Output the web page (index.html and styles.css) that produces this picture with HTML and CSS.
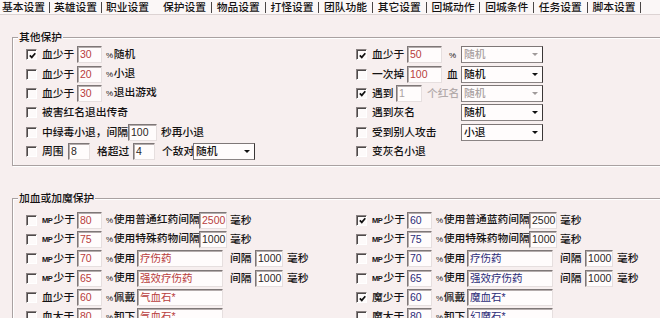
FILE: index.html
```html
<!DOCTYPE html>
<html lang="zh-CN">
<head>
<meta charset="utf-8">
<title>保护设置</title>
<link rel="stylesheet" href="styles.css">
</head>
<body>
<nav class="tabs">
  <span class="tab">基本设置</span><i class="sep sep-n"></i>
  <span class="tab">英雄设置</span><i class="sep sep-n"></i>
  <span class="tab">职业设置</span>
  <span class="tab tab-on">保护设置</span><i class="sep"></i>
  <span class="tab">物品设置</span><i class="sep"></i>
  <span class="tab">打怪设置</span><i class="sep"></i>
  <span class="tab">团队功能</span><i class="sep"></i>
  <span class="tab">其它设置</span><i class="sep"></i>
  <span class="tab">回城动作</span><i class="sep"></i>
  <span class="tab">回城条件</span><i class="sep"></i>
  <span class="tab">任务设置</span><i class="sep"></i>
  <span class="tab">脚本设置</span><i class="sep"></i>
</nav>

<section class="group g1">
  <span class="legend">其他保护</span>
  <div class="cols">
    <div class="col">
      <div class="row"><span class="cb on"><svg viewBox="0 0 7 7"><polyline points="0.8,3.3 2.8,5.4 6.3,1.3"/></svg></span><span class="w35">血少于</span><span class="box w25 red">30</span><span class="ml4"><span class="pct">%</span>随机</span></div>
      <div class="row"><span class="cb"></span><span class="w35">血少于</span><span class="box w25 red">20</span><span class="ml4"><span class="pct">%</span>小退</span></div>
      <div class="row"><span class="cb"></span><span class="w35">血少于</span><span class="box w25 red">30</span><span class="ml4"><span class="pct">%</span>退出游戏</span></div>
      <div class="row"><span class="cb"></span><span>被害红名退出传奇</span></div>
      <div class="row"><span class="cb"></span><span class="w86">中绿毒小退，间隔</span><span class="box w29">100</span><span class="ml4">秒再小退</span></div>
      <div class="row"><span class="cb"></span><span class="w26">周围</span><span class="box w22">8</span><span class="ml7 w36">格超过</span><span class="box w22">4</span><span class="ml7 w31">个敌对</span><span class="combo w62"><span class="cv">随机</span><span class="btn"><i class="arr"></i></span></span></div>
    </div>
    <div class="col">
      <div class="row"><span class="cb on"><svg viewBox="0 0 7 7"><polyline points="0.8,3.3 2.8,5.4 6.3,1.3"/></svg></span><span class="w35">血少于</span><span class="box w35 red">50</span><span class="ml7 w12"><span class="pct">%</span></span><span class="combo w82 dis"><span class="cv">随机</span><span class="btn"><i class="arr"></i></span></span></div>
      <div class="row"><span class="cb"></span><span class="w35">一次掉</span><span class="box w35 red">100</span><span class="ml5 w14">血</span><span class="combo w82"><span class="cv">随机</span><span class="btn"><i class="arr"></i></span></span></div>
      <div class="row"><span class="cb on"><svg viewBox="0 0 7 7"><polyline points="0.8,3.3 2.8,5.4 6.3,1.3"/></svg></span><span class="w24">遇到</span><span class="box w26 off">1</span><span class="ml5 w34 grey">个红名</span><span class="combo w82 dis"><span class="cv">随机</span><span class="btn"><i class="arr"></i></span></span></div>
      <div class="row"><span class="cb"></span><span class="w89">遇到灰名</span><span class="combo w82"><span class="cv">随机</span><span class="btn"><i class="arr"></i></span></span></div>
      <div class="row"><span class="cb"></span><span class="w89">受到别人攻击</span><span class="combo w82"><span class="cv">小退</span><span class="btn"><i class="arr"></i></span></span></div>
      <div class="row"><span class="cb"></span><span>变灰名小退</span></div>
    </div>
  </div>
</section>

<section class="group g2">
  <span class="legend">加血或加魔保护</span>
  <div class="cols">
    <div class="col">
      <div class="row"><span class="cb"></span><span class="w35"><span class="mp">MP</span>少于</span><span class="box w25 red">80</span><span class="ml4 w93"><span class="pct">%</span>使用普通红药间隔</span><span class="box w28 red">2500</span><span class="ml3">毫秒</span></div>
      <div class="row"><span class="cb"></span><span class="w35"><span class="mp">MP</span>少于</span><span class="box w25 red">75</span><span class="ml4 w93"><span class="pct">%</span>使用特殊药物间隔</span><span class="box w28">1000</span><span class="ml3">毫秒</span></div>
      <div class="row"><span class="cb"></span><span class="w35"><span class="mp">MP</span>少于</span><span class="box w25 red">70</span><span class="ml4 w31"><span class="pct">%</span>使用</span><span class="box w86 red">疗伤药</span><span class="ml7 w25">间隔</span><span class="box w28">1000</span><span class="ml4">毫秒</span></div>
      <div class="row"><span class="cb"></span><span class="w35"><span class="mp">MP</span>少于</span><span class="box w25 red">65</span><span class="ml4 w31"><span class="pct">%</span>使用</span><span class="box w86 red">强效疗伤药</span><span class="ml7 w25">间隔</span><span class="box w28">1000</span><span class="ml4">毫秒</span></div>
      <div class="row"><span class="cb"></span><span class="w35">血少于</span><span class="box w25 red">60</span><span class="ml4 w31"><span class="pct">%</span>佩戴</span><span class="box w86 red">气血石*</span></div>
      <div class="row"><span class="cb"></span><span class="w35">血大于</span><span class="box w25 red">80</span><span class="ml4 w31"><span class="pct">%</span>卸下</span><span class="box w86 red">气血石*</span></div>
    </div>
    <div class="col">
      <div class="row"><span class="cb on"><svg viewBox="0 0 7 7"><polyline points="0.8,3.3 2.8,5.4 6.3,1.3"/></svg></span><span class="w35"><span class="mp">MP</span>少于</span><span class="box w25 navy">60</span><span class="ml4 w93"><span class="pct">%</span>使用普通蓝药间隔</span><span class="box w28">2500</span><span class="ml3">毫秒</span></div>
      <div class="row"><span class="cb"></span><span class="w35"><span class="mp">MP</span>少于</span><span class="box w25 navy">75</span><span class="ml4 w93"><span class="pct">%</span>使用特殊药物间隔</span><span class="box w28">1000</span><span class="ml3">毫秒</span></div>
      <div class="row"><span class="cb"></span><span class="w35"><span class="mp">MP</span>少于</span><span class="box w25 navy">70</span><span class="ml4 w31"><span class="pct">%</span>使用</span><span class="box w86 navy">疗伤药</span><span class="ml7 w25">间隔</span><span class="box w28">1000</span><span class="ml4">毫秒</span></div>
      <div class="row"><span class="cb"></span><span class="w35"><span class="mp">MP</span>少于</span><span class="box w25 navy">65</span><span class="ml4 w31"><span class="pct">%</span>使用</span><span class="box w86 navy">强效疗伤药</span><span class="ml7 w25">间隔</span><span class="box w28">1000</span><span class="ml4">毫秒</span></div>
      <div class="row"><span class="cb on"><svg viewBox="0 0 7 7"><polyline points="0.8,3.3 2.8,5.4 6.3,1.3"/></svg></span><span class="w35">魔少于</span><span class="box w25 navy">60</span><span class="ml4 w31"><span class="pct">%</span>佩戴</span><span class="box w86 navy">魔血石*</span></div>
      <div class="row"><span class="cb"></span><span class="w35">魔大于</span><span class="box w25 navy">80</span><span class="ml4 w31"><span class="pct">%</span>卸下</span><span class="box w86 navy">幻魔石*</span></div>
    </div>
  </div>
</section>
</body>
</html>
```

FILE: styles.css
```css
* { box-sizing: border-box; }

html, body {
  margin: 0;
  height: 318px;
  overflow: hidden;
}

body {
  background: #f7efef;
  color: #141212;
  font-family: "Liberation Sans", "Noto Sans CJK SC", sans-serif;
  font-size: 10.75px;
  font-weight: 500;
  line-height: 13px;
}

/* ---------- tab strip ---------- */
.tabs {
  display: flex;
  align-items: center;
  height: 15px;
  padding-left: 2px;
  background: #fbf7f7;
  border-bottom: 1px solid #dcd3d3;
}
.tab {
  flex: none;
  width: 43px;
  white-space: nowrap;
  line-height: 14px;
}
.tab-on { margin-left: 14px; }
.sep {
  flex: none;
  width: 1px;
  height: 11px;
  margin: 0 4.85px;
  background: #4a4646;
}
.sep-n { margin: 0 4px; }

/* ---------- group boxes ---------- */
.group {
  position: relative;
  width: 700px;
  margin-left: 12px;
  border: 1px solid #a9a1a1;
  box-shadow: inset 1px 1px 0 #ffffff, 1px 1px 0 #ffffff;
}
.g1 {
  margin-top: 22px;
  padding: 7px 0 4px;
}
.g2 {
  margin-top: 32px;
  padding-top: 11px;
  height: 200px;
}
.legend {
  position: absolute;
  left: 5px;
  top: -7px;
  padding: 0 1px;
  line-height: 13px;
  background: #f7efef;
}

.cols {
  display: grid;
  grid-template-columns: 330px 330px;
}
.col { padding-left: 13px; }

.row {
  display: flex;
  align-items: center;
  height: 19.4px;
  white-space: nowrap;
}
.row > * { flex: none; }

/* ---------- check boxes ---------- */
.cb {
  display: flex;
  align-items: center;
  justify-content: center;
  width: 11px;
  height: 11px;
  margin-right: 5px;
  border: 1px solid;
  border-color: #8a8282 #ffffff #ffffff #8a8282;
  box-shadow: inset 1px 1px 0 #4e4a4a;
  background: #fdfafa;
}
.cb svg {
  width: 7px;
  height: 7px;
  margin: 1px 0 0 1px;
}
.cb polyline {
  fill: none;
  stroke: #111;
  stroke-width: 1.7;
}

/* ---------- text boxes ---------- */
.box {
  height: 17px;
  padding-left: 2px;
  line-height: 15px;
  font-size: 10.5px;
  font-weight: 400;
  overflow: hidden;
  border: 1px solid;
  border-color: #7e7777 #e6dfdf #e6dfdf #7e7777;
  box-shadow: inset 1px 1px 0 #b4acac;
  background: #fffcfc;
  color: #2a2626;
}
.red { color: #b83c3c; }
.navy { color: #2b2b78; }
.off { color: #aaa2a2; }
.grey { color: #b2aaaa; }

/* ---------- combo boxes ---------- */
.combo {
  display: flex;
  height: 17px;
  border: 1px solid;
  border-color: #7e7777 #3a3636 #8a8484 #7e7777;
  background: #fffcfc;
}
.cv {
  flex: 1;
  padding-left: 2px;
  line-height: 15px;
}
.btn {
  display: flex;
  align-items: center;
  justify-content: center;
  width: 14px;
}
.arr {
  width: 0;
  height: 0;
  border-left: 3px solid transparent;
  border-right: 3px solid transparent;
  border-top: 3px solid #111;
}
.dis .cv { color: #aaa2a2; }
.dis .arr { border-top-color: #a09a9a; }

/* ---------- small glyphs ---------- */
.pct {
  font-size: 8px;
  margin-right: 0.5px;
}
.mp {
  font-size: 7.5px;
  font-weight: bold;
  letter-spacing: -0.4px;
  margin-right: 1px;
}

/* ---------- spacing helpers ---------- */
.ml3 { margin-left: 3px; }
.ml4 { margin-left: 4px; }
.ml5 { margin-left: 5px; }
.ml7 { margin-left: 7px; }
.w12 { width: 12px; }
.w14 { width: 14px; }
.w22 { width: 22px; }
.w24 { width: 24px; }
.w25 { width: 25px; }
.w26 { width: 26px; }
.w28 { width: 28px; }
.w29 { width: 29px; }
.w31 { width: 31px; }
.w34 { width: 34px; }
.w35 { width: 35px; }
.w36 { width: 36px; }
.w62 { width: 62px; }
.w82 { width: 82px; }
.w86 { width: 86px; }
.w89 { width: 89px; }
.w93 { width: 93px; }
```
